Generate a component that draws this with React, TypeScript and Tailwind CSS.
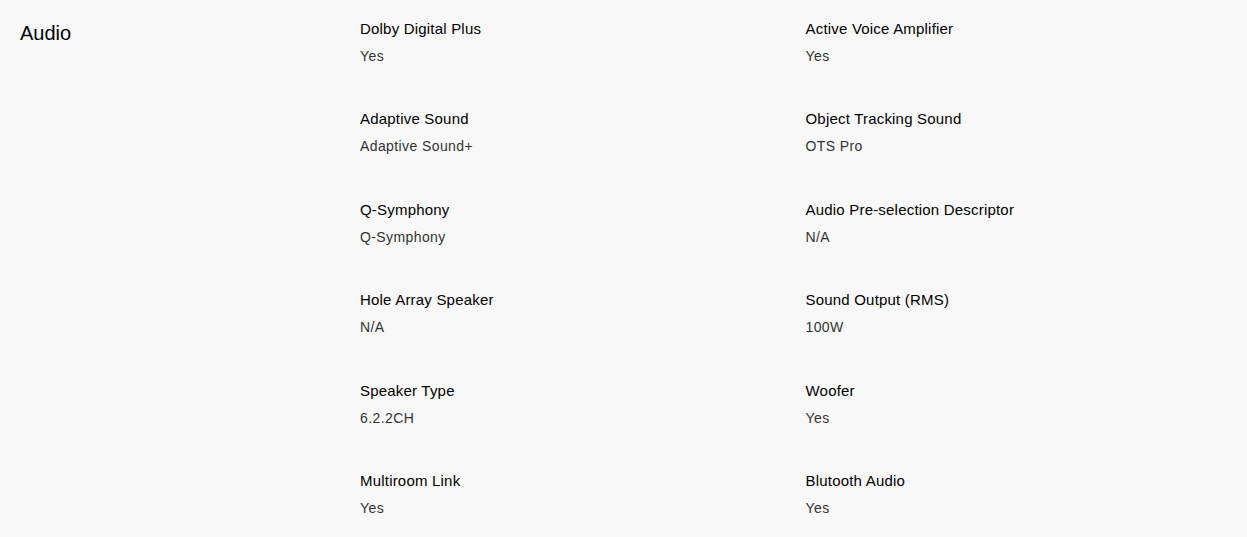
import React from "react";

const items: [string, string][] = [
  ["Dolby Digital Plus", "Yes"],
  ["Active Voice Amplifier", "Yes"],
  ["Adaptive Sound", "Adaptive Sound+"],
  ["Object Tracking Sound", "OTS Pro"],
  ["Q-Symphony", "Q-Symphony"],
  ["Audio Pre-selection Descriptor", "N/A"],
  ["Hole Array Speaker", "N/A"],
  ["Sound Output (RMS)", "100W"],
  ["Speaker Type", "6.2.2CH"],
  ["Woofer", "Yes"],
  ["Multiroom Link", "Yes"],
  ["Blutooth Audio", "Yes"],
];

export default function App() {
  return (
    <div className="min-h-[537px] w-full bg-[#f8f8f8] font-['Liberation_Sans',Arial,sans-serif] flex">
      <div className="w-[360px] shrink-0 pl-[20px] pt-[19px]">
        <h2 className="text-[20px] leading-[28px] text-black">Audio</h2>
      </div>
      <div className="grid grid-cols-[445.5px_1fr] gap-y-[43.4px] pt-[19px] content-start">
        {items.map(([label, value]) => (
          <div key={label} className="flex flex-col">
            <div className="text-[15px] leading-[20px] tracking-[0.2px] text-black">{label}</div>
            <div className="mt-[7px] text-[14px] leading-[20px] tracking-[0.4px] text-[#333]">{value}</div>
          </div>
        ))}
      </div>
    </div>
  );
}
